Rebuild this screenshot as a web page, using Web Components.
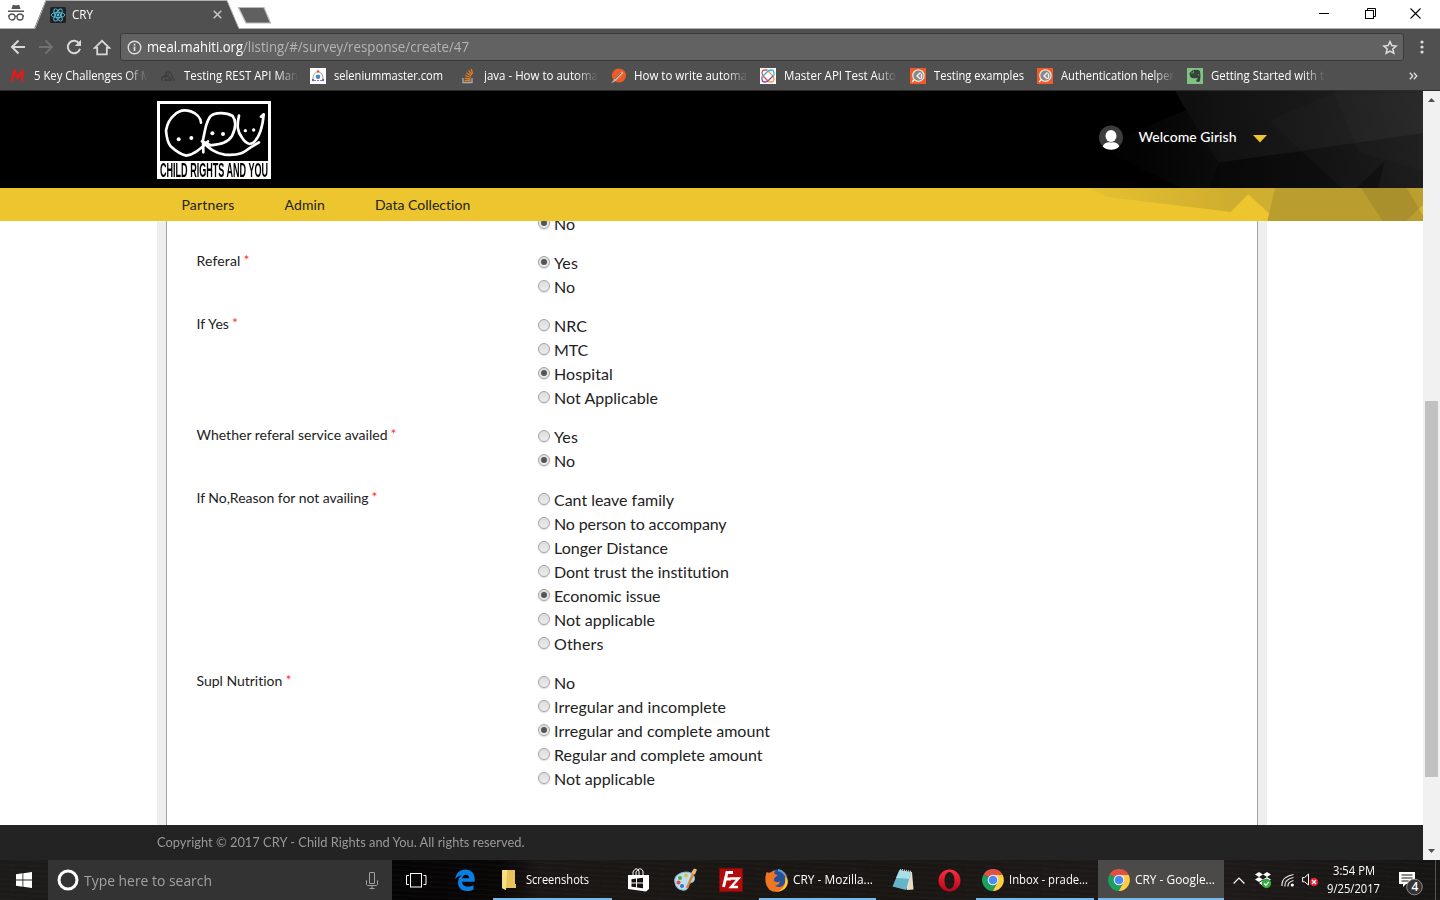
<!DOCTYPE html>
<html lang="en">
<head>
<meta charset="utf-8">
<title>CRY</title>
<style>
html,body{margin:0;height:900px;width:1440px;overflow:hidden;background:#fff;font-family:"Open Sans","Noto Sans",sans-serif}
</style>
</head>
<body>
<desktop-screen></desktop-screen>
<script>
const define=(name,html,init)=>customElements.define(name,class extends HTMLElement{
  connectedCallback(){
    if(this.shadowRoot)return;
    const t=document.createElement('template');
    t.innerHTML=typeof html==='function'?html(this):html;
    this.attachShadow({mode:'open'}).append(t.content.cloneNode(true));
    if(init)init(this,this.shadowRoot);
  }
});

/* One line of text set to a given width: w = px, by glyph scale or by tracking (mode="track") */
define('fit-text',`<style>:host{display:block;white-space:pre;flex:none}span{display:inline-block;transform-origin:0 50%}</style><span><slot></slot></span>`,(el,r)=>{
  const s=r.querySelector('span'),w=+el.getAttribute('w');
  if(!w)return;
  const n=s.getBoundingClientRect().width;
  if(el.getAttribute('mode')==='track')s.style.letterSpacing=((w-n)/el.textContent.length)+'px';
  else s.style.transform=`scaleX(${w/n})`;
  el.style.width=w+'px';
});

const icons={
incognito:`<svg width="18" height="20" viewBox="0 0 18 20"><path d="M4.5 5 5.6 1.3Q6 .5 7 1l2 .4 2-.4q1-.5 1.4.3L13.500 5z" fill="#555"/><path d="M1 7.200h16" stroke="#555" stroke-width="1.500"/><g fill="none" stroke="#555" stroke-width="1.300"><circle cx="5" cy="13" r="3"/><circle cx="13" cy="13" r="3"/><path d="M8 12.500q1-.8 2 0M1 12h1M16 12h1"/></g></svg>`,
react:`<svg width="16" height="16" viewBox="0 0 16 16"><rect width="16" height="16" rx="1.500" fill="#202124"/><g fill="none" stroke="#53c1de" stroke-width=".9"><ellipse cx="8" cy="8" rx="6.800" ry="2.600"/><ellipse cx="8" cy="8" rx="6.800" ry="2.600" transform="rotate(60 8 8)"/><ellipse cx="8" cy="8" rx="6.800" ry="2.600" transform="rotate(120 8 8)"/></g><circle cx="8" cy="8" r="1.400" fill="#53c1de"/></svg>`,
back:`<svg width="16" height="16" viewBox="0 0 16 16"><path d="M15 8H2.500M8.500 1.500 2 8l6.500 6.500" fill="none" stroke="#d8d8d8" stroke-width="2"/></svg>`,
fwd:`<svg width="16" height="16" viewBox="0 0 16 16"><path d="M1 8h12.500M7.500 1.500 14 8l-6.500 6.500" fill="none" stroke="#717171" stroke-width="2"/></svg>`,
reload:`<svg width="16" height="16" viewBox="0 0 16 16"><path d="M13.200 4.500A6.200 6.200 0 1 0 14 9.700" fill="none" stroke="#d8d8d8" stroke-width="2"/><path d="M15 .8V7H8.800z" fill="#d8d8d8"/></svg>`,
home:`<svg width="18" height="17" viewBox="0 0 18 17"><path d="M1.800 8.800 9 1.800l7.200 7H13.800V15.300H4.200V8.800z" fill="none" stroke="#d8d8d8" stroke-width="1.800"/></svg>`,
info:`<svg width="15" height="15" viewBox="0 0 15 15"><circle cx="7.500" cy="7.500" r="6.300" fill="none" stroke="#dedede" stroke-width="1.400"/><path d="M7.500 6.500V11M7.500 3.800v1.600" stroke="#dedede" stroke-width="1.700"/></svg>`,
star:`<svg width="16" height="15" viewBox="0 0 16 15"><path d="m8 1.600 1.800 4 4.300.4-3.300 2.900 1 4.300L8 11l-3.800 2.200 1-4.300L1.900 6l4.300-.4z" fill="none" stroke="#dedede" stroke-width="1.500"/></svg>`,
dots:`<svg width="4" height="14" viewBox="0 0 4 14"><g fill="#dedede"><circle cx="2" cy="2" r="1.600"/><circle cx="2" cy="7" r="1.600"/><circle cx="2" cy="12" r="1.600"/></g></svg>`,
bm1:`<svg width="16" height="16" viewBox="0 0 16 16"><path d="M1.500 13.500 4.500 3l3.300 7L12 3l1 5.500" fill="none" stroke="#f01515" stroke-width="2.200"/><path d="M12.500 8q-1.500 3 .5 5.500" fill="none" stroke="#f01515" stroke-width="2"/></svg>`,
bm2:`<svg width="16" height="16" viewBox="0 0 16 16"><path d="M2 13q-1-4 3-5 1-5 4-4 3 1 3 5 2 1 2 4M4 12h8M6 7l5 4M5 10l4-4" fill="none" stroke="#3b3b3b" stroke-width="1.300"/></svg>`,
bm3:`<svg width="16" height="16" viewBox="0 0 16 16"><rect width="16" height="16" fill="#fff"/><g fill="none" stroke-width="1"><path d="M3 11Q3 5 7 4" stroke="#9db592"/><path d="M9 4q4 1 4 7" stroke="#b98cba"/><path d="M4 12.500h8" stroke="#7a83b0" stroke-dasharray="2 1"/></g><circle cx="8" cy="3.500" r="1.300" fill="#c55"/><circle cx="8" cy="8.800" r="2.300" fill="#4d86c4"/><circle cx="3" cy="12" r="1.200" fill="#6b67a8"/><circle cx="13" cy="12" r="1.200" fill="#6b67a8"/></svg>`,
bm4:`<svg width="16" height="16" viewBox="0 0 16 16"><path d="M3 10v4.500h9V10" fill="none" stroke="#a9adb1" stroke-width="1.300"/><path d="M4.700 12.500h5.800M4.800 10.200l5.700.9M5.300 7.500l5.300 2M6.500 4.700l4.600 3.400M8.600 2.300l3.200 4.600M11.300.8l1.200 5" stroke="#ef7c1a" stroke-width="1.300"/></svg>`,
bm5:`<svg width="16" height="16" viewBox="0 0 16 16"><circle cx="9" cy="7.500" r="7" fill="#f15a24"/><path d="m1 15.500 3-4 8-8 1.500 1.500-8 8z" fill="#c3b6ae"/><path d="m5 11 6-6" stroke="#716b67"/></svg>`,
bm6:`<svg width="16" height="16" viewBox="0 0 16 16"><rect width="16" height="16" fill="#fff"/><g fill="none" stroke-width="1.300" stroke-linecap="round"><path d="M7 2H5Q2 2 2 5q0 2 2 4l4 4" stroke="#e2504d"/><path d="M9 14h2q3 0 3-3 0-2-2-4L8 3" stroke="#f0a04c"/><path d="M2 9v2q0 3 3 3 2 0 4-2l4-4" stroke="#91509c"/><path d="M14 7V5q0-3-3-3-2 0-4 2L3 8" stroke="#36b0d5"/></g></svg>`,
bm7:`<svg width="16" height="16" viewBox="0 0 16 16"><rect width="16" height="16" fill="#f15a29"/><circle cx="8.400" cy="7.600" r="5.700" fill="#888" stroke="#e7e3e0" stroke-width="1.300"/><path d="M10.500 4.500 7 8l3.500 3M11.500 5.500v5" fill="none" stroke="#f2f2f2" stroke-width="1.400"/><path d="m2 14 2.500-2.500" stroke="#fff" stroke-width="1.300"/></svg>`,
bm8:`<svg width="16" height="16" viewBox="0 0 16 16"><rect width="16" height="16" fill="#7fc284"/><path d="M2.500 5 6 2q5-1 7 1 1 5 0 10-2 2-4 0 0-2 2-2l-1-1q-5 1-6.500-1Q2.500 7 2.500 5z" fill="#35443a"/><path d="M4 5h2.500V2.500M11 6l1 1.500" fill="none" stroke="#87a58a" stroke-width=".7"/></svg>`,
user:`<svg width="24" height="25" viewBox="0 0 24 25"><circle cx="12" cy="12.500" r="12" fill="#3d3d3d"/><ellipse cx="12" cy="11" rx="5.500" ry="6" fill="#fff"/><path d="M3.700 21.500Q6 16.500 12 17.500q6-1 8.300 4Q17 24.700 12 24.700t-8.300-3.200z" fill="#fff"/></svg>`,
win:`<svg width="16" height="16" viewBox="0 0 16 16"><path d="M0 2.300 6.500 1.300V7.600H0zM7.300 1.200 16 0v7.600H7.300zM0 8.400h6.500v6.300L0 13.700zM7.300 8.400H16V16l-8.700-1.200z" fill="#fff"/></svg>`,
cortana:`<svg width="22" height="22" viewBox="0 0 22 22"><circle cx="11" cy="11" r="9" fill="none" stroke="#fff" stroke-width="3"/></svg>`,
mic:`<svg width="12" height="17" viewBox="0 0 12 17"><g fill="none" stroke="#a0a0a0"><rect x="3.500" y=".5" width="5" height="11" rx=".5"/><path d="M1 8.500H.5v4l1 1h9l1-1v-4H11M6 13.500v3M3.500 16.500h5"/></g></svg>`,
task:`<svg width="21" height="15" viewBox="0 0 21 15"><g fill="none" stroke="#fff"><rect x="4.500" y=".5" width="11" height="13.500"/><path d="M3 2.500H.5v9H3M17.500 2.500H20v9h-2.500"/></g></svg>`,
edge:`<svg width="20" height="22" viewBox="0 0 20 22"><path d="M.3 10.200C1 4.300 4.600.6 10.300.6c6.300 0 9.400 4.300 9.400 9.700v2.500H7c.3 3.600 3.200 4.900 6.200 4.900 2 0 3.800-.6 5.300-1.600v4.300c-1.800 1-4 1.500-6.300 1.500C6.500 21.900 3 18.600 3 13.400c0-3 1.500-5.700 4-7.200C4.200 6.500 2 7.700.3 10.200zM7.200 9.200h6.900c0-2-1-3.500-3.100-3.500-2 0-3.300 1.400-3.800 3.500z" fill="#0a7fe2"/></svg>`,
folder:`<svg width="14" height="20" viewBox="0 0 14 20"><path d="M4 0h9v14h1v4H4z" fill="#e8c35c"/><path d="M0 0h5l-1 20-4-2z" fill="#fbe291"/><path d="m0 0 4 2v18l-4-2z" fill="#f9dd82"/></svg>`,
store:`<svg width="22" height="24" viewBox="0 0 22 24"><path d="M0 7h21v14l-3 2.500L0 21z" fill="#fff"/><path d="M5 7V4q3-6 6-1v4M8 7V4q4-6 7-1v4" fill="none" stroke="#fff"/><path d="M3.500 11.200 8 10.600V14.500H3.500zM9 10.500l6-.8v4.800H9zM3.500 15.500H8v3.800l-4.500-.6zM9 15.500h6v4.800l-6-.9z" fill="#15110f"/></svg>`,
paint:`<svg width="24" height="24" viewBox="0 0 24 24"><path d="M2 15Q0 8 8 5q9-3 13 3 2 6-4 7-2 1-2 4-1 4-6 3-6-1-7-7z" fill="#bcdcf0" stroke="#8fb9d2"/><circle cx="7" cy="10" r="2" fill="#53a653"/><circle cx="13" cy="7.500" r="2" fill="#e2bf3b"/><circle cx="5.500" cy="14.500" r="2" fill="#d8503f"/><circle cx="9" cy="18" r="2" fill="#3b76c4"/><path d="M20.500 5 14 20" stroke="#d58831" stroke-width="2.400"/><path d="m18 5 3-4.500 3 1-2 5z" fill="#e3b87f"/></svg>`,
fz:`<svg width="24" height="24" viewBox="0 0 24 24"><rect x=".5" y=".5" width="23" height="23" fill="#b30b0b" stroke="#8a0707" stroke-dasharray="1.500 1.500"/><path d="M14 4.500H8L4.500 19M6.500 11H12" fill="none" stroke="#fff" stroke-width="3"/><path d="M11.500 10.500h8L12 19h7" fill="none" stroke="#fff" stroke-width="2.400"/></svg>`,
firefox:`<svg width="23" height="23" viewBox="0 0 23 23"><circle cx="12" cy="10.500" r="10" fill="#23529b"/><path d="M13 1q5 1 8 6" stroke="#57a0d8" stroke-width="2" fill="none"/><path d="M1.500 3q2 1 4 .5 3-2 5-2-2 2-1 3.500 2 0 3 1.500-2 1-3 2.500-2 3 1.500 4 2 .5 4-.5-1 4-5 4 4 3 8 0 4-4 2.500-9.500Q19 4 17 3q5 2 6 9-1 9-10.500 11Q2 23 .5 13 0 7 1.500 3z" fill="#ef7622"/><path d="M20 7q3 3 2.800 7-2 8-10 8.500 6-3 7.200-8 .5-4 0-7.500z" fill="#ffcb32"/></svg>`,
notepad:`<svg width="23" height="22" viewBox="0 0 23 22"><path d="M8 1.500 20 3l1.500 17.500L15 21z" fill="#e7dcc6"/><path d="M7.500 1 19 3.500 14 21 .5 17.500z" fill="#65b5c8"/><path d="M7.500 1 19 3.500 17 10Q8 9 4 9z" fill="#a9dfe8"/><path d="m8 .5 11 2" stroke="#d8d8d8" stroke-width="1.500" stroke-dasharray="1 1"/></svg>`,
opera:`<svg width="23" height="23" viewBox="0 0 23 23"><defs><linearGradient id="g" x2="0" y2="1"><stop stop-color="#ff2b40"/><stop offset="1" stop-color="#b5071a"/></linearGradient></defs><path fill-rule="evenodd" d="M11.500.5a11 11 0 1 0 0 22 11 11 0 1 0 0-22zm0 2.500c3 0 5 3.700 5 8.500s-2 8.500-5 8.500-5-3.700-5-8.500 2-8.500 5-8.500z" fill="url(#g)"/></svg>`,
chrome:`<svg width="22" height="22" viewBox="0 0 22 22"><path d="M11 11 1.500 5.500A11 11 0 0 1 20.600 5.500L20.700 6H11z" fill="#de5145"/><path d="M11 11 1.500 5.500A11 11 0 0 0 10.700 22L15.300 13.500z" fill="#1aa15f"/><path d="M11 6h9.700A11 11 0 0 1 10.700 22L15.500 13.500z" fill="#ffce44"/><circle cx="11" cy="11" r="5.300" fill="#f1f1f1"/><circle cx="11" cy="11" r="4.300" fill="#4a8af4"/></svg>`,
up:`<svg width="12" height="7" viewBox="0 0 12 7"><path d="m.6 6.500 5.400-5.500 5.400 5.500" fill="none" stroke="#fff" stroke-width="1.200"/></svg>`,
dropbox:`<svg width="17" height="17" viewBox="0 0 17 17"><path d="m4 0 4 2.500L4 5 0 2.500zM12 0l4 2.500L12 5 8 2.500zM4 5l4 2.500L4 10 0 7.500zM12 5l4 2.500L12 10 8 7.500zM8 8.500l4 2.500-4 2.800L4 11z" fill="#fff"/><circle cx="11.500" cy="11.500" r="4.700" fill="#2fae3c"/><path d="m9.200 11.500 1.700 1.800 3-3.400" fill="none" stroke="#fff" stroke-width="1.300"/></svg>`,
wifi:`<svg width="14" height="14" viewBox="0 0 14 14"><g fill="none" stroke="#e5e5e5" stroke-width="1.200"><path d="M1 13Q0 4 12.500 1.500M4 13.500Q3 6.500 12.500 4.500M7 13.500Q6.500 9 12.500 7.500"/></g><circle cx="11.300" cy="12" r="1.600" fill="#fff"/></svg>`,
speaker:`<svg width="17" height="14" viewBox="0 0 17 14"><path d="M.6 4.500h2L6.500 1v11L2.600 8.800h-2z" fill="none" stroke="#fff"/><circle cx="12" cy="9" r="4.300" fill="#e01f2c"/><path d="m10 7 4 4m0-4-4 4" stroke="#fff" stroke-width="1.200"/></svg>`,
notif:`<svg width="26" height="26" viewBox="0 0 26 26"><path d="M1 2h16v12H8l-3 3v-3H1z" fill="#fff"/><path d="M3.500 5h11M3.500 8h11M3.500 11h7" stroke="#1a1817"/><circle cx="16.500" cy="17" r="7.800" fill="#353333" stroke="#8b8b8b"/></svg>`
};
define('ui-icon',el=>`<style>:host{display:block;flex:none;line-height:0}svg{display:block}</style>${icons[el.getAttribute('name')]}`);

define('tab-strip',`<style>
:host{display:flex;height:29px;background:#fff;position:relative}
.inc{padding:4px 0 0 7px;width:27px;box-sizing:content-box}
.tab{flex:none;width:205px;height:29px;position:relative}
.tab>svg,.new{display:block}
.row{position:absolute;inset:0;display:flex;align-items:center;padding:0 17px 0 16px;color:#fff;font-size:12px}
.row fit-text{margin-left:6px}.x{margin-left:auto}
.new{margin:6px 0 0 -2px}
.line{position:absolute;left:0;right:0;bottom:0;height:1px;background:#aeb3af}
.win{margin-left:auto;display:flex;gap:34.5px;padding:8px 19px 0 0}
.win svg{display:block}
</style>
<div class="line"></div>
<div class="inc"><ui-icon name="incognito"></ui-icon></div>
<div class="tab"><svg width="206" height="29"><path d="M0 29 11.500.5H193L205 29z" fill="#505050"/><path d="M0 28.500h1L12 .500H193L205 28.500" fill="none" stroke="#b0b0b0"/></svg>
<div class="row"><ui-icon name="react"></ui-icon><fit-text w="21">CRY</fit-text><svg class="x" width="9" height="9"><path d="m.7.7 7.600 7.600m0-7.600L.7 8.300" stroke="#c4c4c4" stroke-width="1.600"/></svg></div></div>
<svg class="new" width="36" height="19"><path d="M1.500 1.500H27L33.500 17H9z" fill="#606060" stroke="#b9b9b9" stroke-width="1.200"/></svg>
<div class="win"><svg width="11" height="11"><path d="M0 5.500h10" stroke="#000"/></svg><svg width="11" height="11"><g fill="none" stroke="#000"><path d="M2.500 2.500v-2h8v8h-2"/><rect x=".5" y="2.500" width="8" height="8"/></g></svg><svg width="11" height="11"><path d="m.5.5 10 10m0-10-10 10" stroke="#000" stroke-width="1.100"/></svg></div>`);

define('book-mark',el=>`<style>
:host{display:flex;align-items:center;gap:8px;width:${el.getAttribute('slotw')||150}px;flex:none;color:#fff;font-size:12px;height:20px}
div{width:114px;overflow:hidden;height:20px;line-height:20px;${el.hasAttribute('fade')?'-webkit-mask:linear-gradient(90deg,#000 92px,transparent 114px);mask:linear-gradient(90deg,#000 92px,transparent 114px)':''}}
</style><ui-icon name="${el.getAttribute('icon')}"></ui-icon><div><fit-text w="${el.getAttribute('w')}">${el.textContent}</fit-text></div>`);

define('browser-toolbar',`<style>
:host{display:block;height:62px;background:#505050;box-sizing:border-box;border-bottom:1px solid #2c2c2c}
.nav{display:flex;align-items:center;height:36px;padding:0 16px 0 10px}
.nav>ui-icon{margin-right:12px}.nav>ui-icon.d{margin:0 0 0 16px}
.nav>ui-icon[name=home]{margin-left:-1px}
.url{flex:1;height:28px;box-sizing:border-box;border:1px solid #3a3a3a;border-radius:3px;background:#626262;display:flex;align-items:center;padding:0 5px 0 6px;font-size:14px;color:#fff;margin-left:-3px}
.url fit-text:nth-of-type(1){margin-left:5px}.dim{color:#b4b4b4}.s{margin-left:auto}
.url fit-text{margin-top:-1px}
.bm{display:flex;padding-left:10px;height:22px;align-items:center}
.more{margin-left:72px}
</style>
<div class="nav"><ui-icon name="back"></ui-icon><ui-icon name="fwd"></ui-icon><ui-icon name="reload"></ui-icon><ui-icon name="home"></ui-icon>
<div class="url"><ui-icon name="info"></ui-icon><fit-text w="96">meal.mahiti.org</fit-text><fit-text class="dim" w="226">/listing/#/survey/response/create/47</fit-text><ui-icon class="s" name="star"></ui-icon></div><ui-icon class="d" name="dots"></ui-icon></div>
<div class="bm"><book-mark icon="bm1" w="117" fade>5 Key Challenges Of M</book-mark><book-mark icon="bm2" w="114" fade>Testing REST API Man</book-mark><book-mark icon="bm3" w="109">seleniummaster.com</book-mark><book-mark icon="bm4" w="114" fade>java - How to automa</book-mark><book-mark icon="bm5" w="113" fade>How to write automa</book-mark><book-mark icon="bm6" w="112" fade>Master API Test Auto</book-mark><book-mark icon="bm7" w="90" slotw="127">Testing examples</book-mark><book-mark icon="bm7" w="113" fade>Authentication helper</book-mark><book-mark icon="bm8" w="113" fade>Getting Started with t</book-mark>
<svg class="more" width="9" height="8"><path d="m.8.800 3 3.200-3 3.200M4.800.800l3 3.200-3 3.200" fill="none" stroke="#e0e0e0" stroke-width="1.300"/></svg></div>`);

define('cry-logo',`<style>
:host{display:block;width:114px;height:78px;background:#fff;box-sizing:border-box;padding:3px 3px 0}
svg{display:block;background:#000}
fit-text{font:bold 19.5px/19.6px "Liberation Sans",Arial,sans-serif;color:#000;height:18px}
</style>
<svg width="108" height="57" viewBox="60 42 324 171"><g fill="none" stroke="#fff" stroke-width="8" stroke-linecap="round" stroke-linejoin="round"><path d="M183 98C181 68 130 45 102 76C83 92 80 110 78 122C80 145 84 160 92 169C112 188 128 195 139 197C160 194 180 180 204 154"/><path d="M190 187 189 150C197 110 200 95 210 80C225 64 262 68 278 78C292 98 286 118 276 138C262 160 240 162 212 166L186 154C205 172 222 190 254 194C300 198 315 186 332 172L357 157"/><path d="M297 77C290 108 292 125 306 143C318 163 330 164 340 158C360 140 368 110 371 73L363 80"/></g><g fill="#fff"><circle cx="116" cy="148" r="6"/><circle cx="154" cy="144" r="6"/><circle cx="217" cy="130" r="6"/><circle cx="249" cy="132" r="6"/><circle cx="316" cy="122" r="5"/><circle cx="341" cy="120" r="5"/></g></svg><fit-text w="108">CHILD RIGHTS AND YOU</fit-text>`);

define('site-header',`<style>
:host{display:block;position:relative;background:#000;font-family:Lato,sans-serif}
.top{height:97px;display:flex;align-items:center;box-sizing:border-box;padding:0 156.5px 0 157px;position:relative}
.art{position:absolute;right:0;top:0}
cry-logo{margin-top:1px;position:relative}
.who{margin-left:auto;display:flex;align-items:center;color:#fff;font-size:14px;font-weight:500;position:relative;padding-bottom:5px}
.who fit-text{margin:-1px 16px 0 15.500px}.who svg{margin-top:4px}
nav{height:33px;background:#edc62f;display:flex;align-items:center;gap:50px;padding-left:181.500px;font-size:14px;color:#222;position:relative;line-height:33px}
</style>
<div class="top"><svg class="art" width="363" height="97" viewBox="0 3 1089 291"><defs><linearGradient id="a" gradientUnits="userSpaceOnUse" x1="0" y1="200" x2="1089" y2="60"><stop stop-color="#000"/><stop offset=".2" stop-color="#030303"/><stop offset=".45" stop-color="#0c0c0c"/><stop offset=".7" stop-color="#131313"/><stop offset="1" stop-color="#1e1e1e"/></linearGradient></defs><rect width="1089" height="294" fill="url(#a)"/><path d="M0 0H345L378 60 190 140 140 185 360 294H0z" fill="#000"/><path d="M345 3h32v57z" fill="#0a0a0a"/><path d="M345 3H1089V130L475 218z" fill="#fff" fill-opacity=".028"/><path d="m630 90 190-80h269v120L725 184z" fill="#fff" fill-opacity=".016"/><path d="m475 218 250-34 120 110H450z" fill="#000" fill-opacity=".25"/><path d="M1005 3h84v240L895 185 820 3z" fill="#fff" fill-opacity=".016"/><path d="m973 215-85 79h67z" fill="#000" fill-opacity=".3"/></svg>
<cry-logo></cry-logo>
<div class="who"><ui-icon name="user"></ui-icon><fit-text mode="track" w="98">Welcome Girish</fit-text><svg width="14" height="8"><path d="M0 0h14L7 7.500z" fill="#edc62f"/></svg></div></div>
<nav><svg class="art" width="363" height="33" viewBox="0 294 1089 99"><defs><linearGradient id="b"><stop stop-color="#e6c030"/><stop offset="1" stop-color="#cbab2f"/></linearGradient></defs><path d="M85 294H583L512 366 142 321z" fill="url(#b)"/><path d="M545 294H1089V393H652L564 312z" fill="#cfae30"/><path d="M645 294H1089V393H622z" fill="#b99e2f"/><path d="M903 294h137l49 80v19H968z" fill="#aa902c"/><path d="M1041 294h48v80z" fill="#bba02f"/><path d="M1089 343v50h-50z" fill="#b99e2f"/><path d="m1089 345-12 12 12 20z" fill="#d9b72f"/></svg>
<fit-text mode="track" w="53">Partners</fit-text><fit-text mode="track" w="40.500">Admin</fit-text><fit-text mode="track" w="95.500">Data Collection</fit-text></nav>`);

define('radio-option',`<style>
:host{display:flex;height:24px;line-height:24px;font-size:16px;color:#222}
i{width:12px;height:12px;box-sizing:border-box;border-radius:50%;border:1px solid #a5a5a5;background:linear-gradient(#dcdcdc,#ededed);margin:5px 4px 0 0;display:grid;place-items:center;box-shadow:0 1px 1px #ddd}
:host([on]) i::after{content:"";width:6px;height:6px;border-radius:50%;background:#555}
</style><i></i><slot></slot>`);

const questions=[
 ['',0,[['No',21,1]]],
 ['Referal',44,[['Yes',24,1],['No',21]]],
 ['If Yes',32.5,[['NRC',33],['MTC',34],['Hospital',59,1],['Not Applicable',104]]],
 ['Whether referal service availed',191,[['Yes',24],['No',21,1]]],
 ['If No,Reason for not availing',172,[['Cant leave family',120],['No person to accompany',172.5],['Longer Distance',114],['Dont trust the institution',175.5],['Economic issue',106.5,1],['Not applicable',101],['Others',49.5]]],
 ['Supl Nutrition',86,[['No',21],['Irregular and incomplete',172],['Irregular and complete amount',216,1],['Regular and complete amount',208.5],['Not applicable',101]]]
];
define('survey-form',()=>`<style>
:host{display:block;height:604px;overflow:hidden;font-family:Lato,sans-serif;color:#222}
.wrap{margin:0 156px 0 157px;background:#eee;padding:0 9px;height:604px;box-sizing:border-box}
.panel{background:#fff;border:solid #a5a5a5;border-width:0 1px;height:604px;box-sizing:border-box;padding-left:29.500px;display:flow-root}
.list{margin-top:-9px;display:flex;flex-direction:column;gap:15px}
.q{display:grid;grid-template-columns:341.500px 1fr}
.l{display:flex;font-size:14px;line-height:20px;height:20px}
b{font-weight:400;color:#f33;margin-left:3px;margin-top:-1px}
</style><div class="wrap"><div class="panel"><div class="list">${questions.map(([l,w,o])=>`<div class="q"><div class="l">${l?`<fit-text mode="track" w="${w}">${l}</fit-text><b>*</b>`:''}</div><div>${o.map(([t,tw,on])=>`<radio-option ${on?'on':''}><fit-text mode="track" w="${tw}">${t}</fit-text></radio-option>`).join('')}</div></div>`).join('')}</div></div></div>`);

define('site-footer',`<style>:host{display:block;height:35px;background:#232323;color:#999;font:14px/34px Lato,sans-serif;padding-left:156.500px}</style><fit-text w="367.500">Copyright © 2017 CRY - Child Rights and You. All rights reserved.</fit-text>`);

define('scroll-bar',`<style>:host{display:flex;flex-direction:column;align-items:center;width:17px;background:#f1f1f1;height:769px}
svg{display:block;margin:7px 0 0}.t{width:13px;height:376px;background:#c1c1c1;margin-top:299px}.d{margin:auto 0 7px}</style>
<svg width="7" height="4"><path d="M0 4h7L3.500 0z" fill="#505050"/></svg><div class="t"></div><svg class="d" width="7" height="4"><path d="M0 0h7L3.500 4z" fill="#505050"/></svg>`);

define('task-app',el=>`<style>
:host{display:flex;align-items:center;gap:5px;height:40px;box-sizing:border-box;padding-left:6px;border-bottom:2px solid #76b9ed;color:#fff;font-size:12px;line-height:38px;padding-top:2px}
:host([active]){background:#4c4a49;padding-left:10px}
:host([folder]){padding-left:9px;gap:10px}
</style><ui-icon name="${el.getAttribute('icon')}"></ui-icon><fit-text w="${el.getAttribute('w')}">${el.textContent}</fit-text>`);

define('task-bar',`<style>
:host{display:grid;height:40px;grid-template-columns:48px 344px 48px 53px 119px 53px 39px 53px 120px 52px 47px 118px 4px 126px 30px 18px 31px 15px 71px 51px;background:repeating-linear-gradient(3deg,#ffffff05 0 1px,transparent 2px 5px),linear-gradient(90deg,#1d1b19 0,#1d1b19 48px,#050404 390px,#090606 500px,#1b1715 540px,#191614 900px,#1e1b1a 1200px,#171514);color:#fff}
.c{display:flex;align-items:center;justify-content:center}
.search{background:#333;display:flex;align-items:center;padding:0 14px 0 9px;color:#a2a2a2;font-size:15px}
.search fit-text{margin:-1px auto 0 5px}
.ff{margin:0 1px 0 2px}
.clock{display:flex;flex-direction:column;align-items:center;font-size:12px;line-height:18px;padding-top:2px}
.n{position:relative;display:flex;padding:10px 0 0 9px}
.n span{position:absolute;left:21px;top:18px;width:10px;text-align:center;font-size:12px;line-height:18px;font-weight:600}
.n::after{content:"";position:absolute;right:4px;top:0;width:1px;height:40px;background:#555}
</style>
<div class="c"><ui-icon name="win"></ui-icon></div>
<div class="search"><ui-icon name="cortana"></ui-icon><fit-text w="128">Type here to search</fit-text><ui-icon name="mic"></ui-icon></div>
<div class="c"><ui-icon name="task"></ui-icon></div>
<div class="c" style="padding-right:4px"><ui-icon name="edge"></ui-icon></div>
<task-app icon="folder" folder w="63">Screenshots</task-app>
<div class="c"><ui-icon name="store"></ui-icon></div><div class="c"><ui-icon name="paint"></ui-icon></div><div class="c"><ui-icon name="fz"></ui-icon></div>
<task-app class="ff" icon="firefox" w="80">CRY - Mozilla...</task-app>
<div class="c"><ui-icon name="notepad"></ui-icon></div><div class="c" style="padding-right:7px"><ui-icon name="opera"></ui-icon></div>
<task-app icon="chrome" w="79">Inbox - prade...</task-app><div></div><task-app icon="chrome" active w="80">CRY - Google...</task-app>
<div class="c"><ui-icon name="up"></ui-icon></div><div class="c"><ui-icon name="dropbox"></ui-icon></div><div class="c"><ui-icon name="wifi"></ui-icon></div><div class="c"><ui-icon name="speaker"></ui-icon></div>
<div class="clock"><fit-text w="42">3:54 PM</fit-text><fit-text w="53">9/25/2017</fit-text></div>
<div class="n"><ui-icon name="notif"></ui-icon><span>4</span></div>`);

define('desktop-screen',`<style>
:host{display:flex;flex-direction:column;width:1440px;height:900px;overflow:hidden}
.view{display:grid;grid-template-columns:1423px 17px;height:769px}
</style><tab-strip></tab-strip><browser-toolbar></browser-toolbar>
<div class="view"><div><site-header></site-header><survey-form></survey-form><site-footer></site-footer></div><scroll-bar></scroll-bar></div>
<task-bar></task-bar>`);
</script>
</body>
</html>
